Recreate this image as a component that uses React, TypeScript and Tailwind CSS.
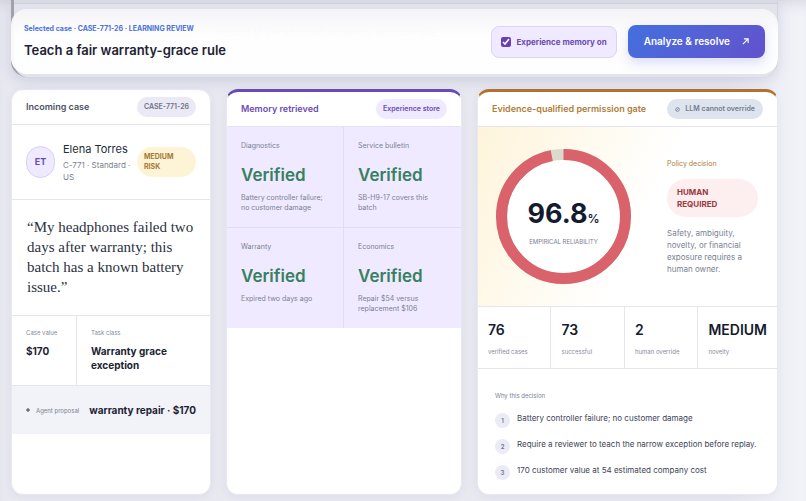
import React, { useState } from 'react';
import clsx from 'clsx';

const evidence = [
  { label: 'Diagnostics', status: 'Verified', note: 'Battery controller failure; no customer damage' },
  { label: 'Service bulletin', status: 'Verified', note: 'SB-H9-17 covers this batch' },
  { label: 'Warranty', status: 'Verified', note: 'Expired two days ago' },
  { label: 'Economics', status: 'Verified', note: 'Repair $54 versus replacement $106' }
];

const stats = [
  { value: '76', label: 'verified cases' },
  { value: '73', label: 'successful' },
  { value: '2', label: 'human override' },
  { value: 'MEDIUM', label: 'novelty' }
];

const reasons = [
  'Battery controller failure; no customer damage',
  'Require a reviewer to teach the narrow exception before replay.',
  '170 customer value at 54 estimated company cost'
];

function ReliabilityRing({ value }: { value: number }) {
  const radius = 62;
  const length = 2 * Math.PI * radius;

  return (
    <div className="relative h-[135px] w-[135px] shrink-0">
      <svg viewBox="0 0 135 135" className="h-full w-full" aria-hidden="true">
        <circle cx="67.5" cy="67.5" r={radius} fill="#fff" stroke="#dcd9cd" strokeWidth="11" />
        <circle
          cx="67.5"
          cy="67.5"
          r={radius}
          fill="none"
          stroke="#d9626b"
          strokeWidth="11"
          strokeDasharray={`${(length * value) / 100} ${length}`}
          transform="rotate(-90 67.5 67.5)"
        />
      </svg>
      <div className="absolute inset-0 flex flex-col items-center justify-center pt-3">
        <p className="flex items-baseline text-[#151b2e]">
          <strong className="text-[27px] leading-8 font-bold">{value}</strong>
          <span className="text-[12px] font-semibold">%</span>
        </p>
        <p className="mt-[6px] text-[6px] leading-3 text-[#7b8192]">EMPIRICAL RELIABILITY</p>
      </div>
    </div>
  );
}

function IncomingCase() {
  return (
    <section className="overflow-hidden rounded-xl border border-[#e8e8f0] bg-white shadow-[0_2px_8px_rgba(60,60,110,0.06)]">
      <header className="flex h-[35px] items-center justify-between border-b border-[#e4e5ee] px-[14px]">
        <h2 className="text-[9px] font-semibold text-[#4b5366]">Incoming case</h2>
        <span className="rounded-full bg-[#eae9f5] px-[7px] py-1 text-[7px] leading-3 font-semibold text-[#6c7285]">
          CASE-771-26
        </span>
      </header>

      <div className="flex h-[75px] items-center border-b border-[#e4e5ee] px-[14px]">
        <div className="flex h-8 w-[29px] shrink-0 items-center justify-center rounded-full border border-[#d9cff6] bg-[#efeaff] text-[9px] font-bold text-[#6a4bb5]">
          ET
        </div>
        <div className="ml-2 min-w-0 flex-1">
          <p className="text-[11px] leading-4 text-[#252b3c]">Elena Torres</p>
          <p className="mt-[2px] text-[8px] leading-3 text-[#7b8192]">C-771 · Standard · US</p>
        </div>
        <span className="w-[59px] shrink-0 rounded-full bg-[#fdf3d6] px-[7px] py-[5px] text-[7px] leading-[10px] font-bold text-[#a77832]">
          MEDIUM RISK
        </span>
      </div>

      <blockquote className="h-[116px] border-b border-[#e4e5ee] px-[15px] pt-[17px] font-['Liberation_Serif',serif] text-[15px] leading-5 text-[#2b3141]">
        “My headphones failed two days after warranty; this batch has a known battery issue.”
      </blockquote>

      <dl className="grid h-[70px] grid-cols-[65px_1fr] border-b border-[#e4e5ee]">
        <div className="border-r border-[#e4e5ee] px-[14px] pt-3">
          <dt className="text-[6px] leading-[10px] text-[#868c9b]">Case value</dt>
          <dd className="mt-[6px] text-[10px] leading-[14px] font-bold text-[#1c2233]">$170</dd>
        </div>
        <div className="px-[14px] pt-3">
          <dt className="text-[6px] leading-[10px] text-[#868c9b]">Task class</dt>
          <dd className="mt-[6px] text-[10px] leading-[14px] font-bold text-[#1c2233]">Warranty grace exception</dd>
        </div>
      </dl>

      <div className="flex h-12 items-center justify-between bg-[#f2f3f9] px-[14px] whitespace-nowrap">
        <p className="flex items-center gap-[6px] text-[6px] text-[#7b8192]">
          <svg viewBox="0 0 8 8" className="h-1 w-1" fill="#5c6275" aria-hidden="true">
            <path d="M4 0Q4.6 3.4 8 4Q4.6 4.6 4 8Q3.4 4.6 0 4Q3.4 3.4 4 0Z" stroke="#5c6275" />
          </svg>
          Agent proposal
        </p>
        <strong className="text-[10px] font-bold text-[#1c2233]">warranty repair · $170</strong>
      </div>
    </section>
  );
}

function MemoryRetrieved() {
  return (
    <section className="overflow-hidden rounded-xl border border-t-3 border-[#e8e8f0] border-t-[#6a4bb5] bg-white shadow-[0_2px_8px_rgba(60,60,110,0.06)]">
      <header className="flex h-[35px] items-center justify-between border-b border-[#e6e2f3] px-[14px]">
        <h2 className="text-[9px] font-semibold text-[#6a4bb5]">Memory retrieved</h2>
        <span className="rounded-full bg-[#efeaff] px-[7px] py-1 text-[7px] leading-3 font-semibold text-[#6a4bb5]">
          Experience store
        </span>
      </header>
      <div className="grid grid-cols-2">
        {evidence.map((item, i) => (
          <div
            key={item.label}
            className={clsx(
              'border-[#e2ddf2] bg-[#efeaff] px-[14px] pt-[14px]',
              i < 2 ? 'h-[101px] border-b' : 'h-[100px]',
              i % 2 === 0 && 'border-r'
            )}
          >
            <p className="text-[7px] leading-[10px] text-[#7b8192]">{item.label}</p>
            <p className="mt-3 text-[17px] leading-6 font-semibold text-[#38805f]">{item.status}</p>
            <p className="mt-[6px] text-[7px] leading-[10px] text-[#7b8192]">{item.note}</p>
          </div>
        ))}
      </div>
    </section>
  );
}

function PermissionGate() {
  return (
    <section className="overflow-hidden rounded-xl border border-t-3 border-[#e8e8f0] border-t-[#b07430] bg-white shadow-[0_2px_8px_rgba(60,60,110,0.06)]">
      <header className="flex h-[35px] items-center justify-between border-b border-[#e4e5ee] px-[14px] whitespace-nowrap">
        <h2 className="text-[9px] font-semibold text-[#b07c38]">Evidence-qualified permission gate</h2>
        <span className="flex items-center gap-[5px] rounded-full bg-[#dee4ed] px-2 py-1 text-[7px] leading-3 font-semibold text-[#727b8d]">
          <svg viewBox="0 0 8 8" className="h-[5px] w-[5px]" fill="none" stroke="#727b8d" strokeWidth="1.2" aria-hidden="true">
            <circle cx="4" cy="4" r="3" />
            <path d="M2 6L6 2" />
          </svg>
          LLM cannot override
        </span>
      </header>

      <div className="flex h-[180px] items-center gap-9 border-b border-[#e4e5ee] bg-linear-115 from-[#fef4da] to-white to-55% pr-[19px] pl-[18px]">
        <ReliabilityRing value={96.8} />
        <div className="min-w-0 flex-1">
          <p className="text-[7px] leading-[10px] text-[#b07c38]">Policy decision</p>
          <p className="mt-[10px] rounded-full bg-[#fdeeef] px-[10px] py-[7px] text-[8px] leading-3 font-bold text-[#993a3c]">
            HUMAN
            <br />
            REQUIRED
          </p>
          <p className="mt-[10px] text-[8px] leading-3 text-[#7b8192]">
            Safety, ambiguity, novelty, or financial exposure requires a human owner.
          </p>
        </div>
      </div>

      <dl className="grid h-[62px] grid-cols-[1fr_1fr_1fr_auto] border-b border-[#e4e5ee]">
        {stats.map((stat) => (
          <div
            key={stat.label}
            className="flex flex-col-reverse justify-end border-r border-[#e4e5ee] px-[10px] pt-[14px] whitespace-nowrap last:border-r-0"
          >
            <dt className="mt-2 text-[6px] leading-[10px] text-[#868c9b]">{stat.label}</dt>
            <dd className="text-[14px] leading-[18px] font-semibold text-[#151b2e]">{stat.value}</dd>
          </div>
        ))}
      </dl>

      <div className="px-[17px] pt-[22px] pb-[14px]">
        <h3 className="text-[6px] leading-[10px] text-[#7b8192]">Why this decision</h3>
        <ol className="mt-[10px] space-y-[9px]">
          {reasons.map((reason, i) => (
            <li key={reason} className="flex items-start gap-[7px] text-[8px] leading-[14px] text-[#3d4456]">
              <span className="mt-[2px] flex h-[15px] w-[15px] shrink-0 items-center justify-center rounded-full bg-[#ebebf6] text-[6px] font-semibold text-[#6c7285]">
                {i + 1}
              </span>
              {reason}
            </li>
          ))}
        </ol>
      </div>
    </section>
  );
}

export default function App() {
  const [memoryOn, setMemoryOn] = useState(true);

  return (
    <main className="min-h-screen bg-linear-to-r from-[#e8e8f1] from-90% to-[#f2f3f9] pr-7 pb-[6px] pl-[11px] font-['Inter',sans-serif] antialiased shadow-[inset_0_12px_14px_-10px_rgba(60,60,90,0.16)]">
      <div className="relative pt-[9px] pb-[3px]">
        <div className="absolute inset-0 overflow-hidden rounded-b-2xl border-r border-l-3 border-r-[#d5d5e0] border-l-[#9fa1ad] bg-[#e2e2ec] shadow-[0_4px_14px_rgba(60,60,110,0.14)]">
          <div className="h-1 border-b border-[#cfcfdb] bg-[#dadae5]" />
          <p className="pt-5 pl-[205px] text-[10px] leading-4 whitespace-nowrap text-[#a9abb8]" aria-hidden="true">
            record of the admitted evidence, decision rule,
          </p>
        </div>
        <div className="relative flex h-[65px] items-center justify-between rounded-2xl bg-linear-to-b from-[#f5f5f8]/95 to-white/95 to-40% pr-[13px] pl-[13px]">
          <div>
            <p className="text-[7px] leading-[10px] font-bold text-[#4a72dc]">
              Selected case · CASE-771-26 · LEARNING REVIEW
            </p>
            <h1 className="mt-[6px] text-[13px] leading-5 font-semibold text-[#1c2233]">
              Teach a fair warranty-grace rule
            </h1>
          </div>
          <div className="flex items-center gap-[11px]">
            <label className="flex h-8 items-center gap-[6px] rounded-lg border border-[#ddd3f5] bg-[#efeaff] px-[9px] text-[8px] font-bold text-[#6a4bb5]">
              <input
                type="checkbox"
                checked={memoryOn}
                onChange={(e) => setMemoryOn(e.target.checked)}
                className="h-[10px] w-[10px] accent-[#6a3fb5]"
              />
              Experience memory on
            </label>
            <button
              type="button"
              className="flex h-[33px] items-center gap-3 rounded-lg bg-linear-135 from-[#4170df] to-[#6251cc] px-4 text-[10px] font-semibold text-white shadow-[0_5px_12px_rgba(80,90,220,0.2)]"
            >
              Analyze &amp; resolve
              <svg viewBox="0 0 8 8" className="h-[7px] w-[7px]" fill="none" stroke="currentColor" strokeWidth="1.3" aria-hidden="true">
                <path d="M1 7L7 1M2.2 1H7V5.8" />
              </svg>
            </button>
          </div>
        </div>
      </div>

      <div className="mt-3 grid grid-cols-[200fr_236fr_301fr] gap-[15px]">
        <IncomingCase />
        <MemoryRetrieved />
        <PermissionGate />
      </div>
    </main>
  );
}
